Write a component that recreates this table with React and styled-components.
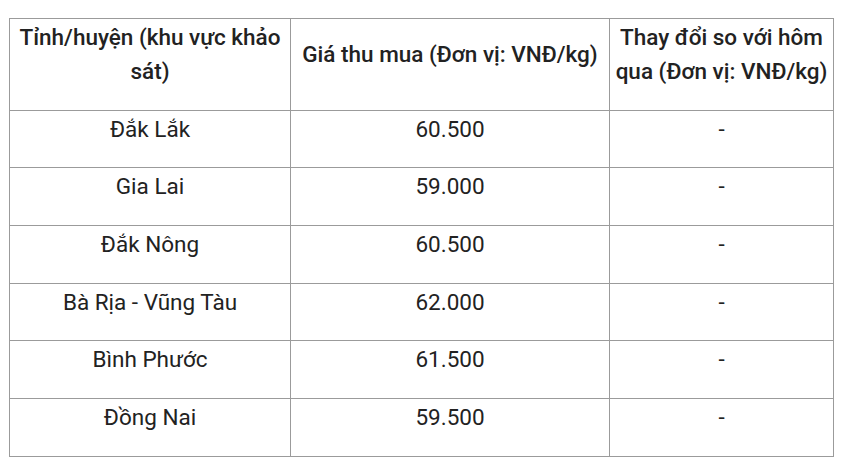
import React from 'react';
import styled, { createGlobalStyle } from 'styled-components';

const GlobalStyle = createGlobalStyle`
  body {
    margin: 0;
    background: #ffffff;
    font-family: Roboto, 'Liberation Sans', sans-serif;
    color: #222222;
  }
`;

const Page = styled.div`
  padding: 18px 0 0 9px;
`;

const Table = styled.table`
  border-collapse: collapse;
  table-layout: fixed;
  width: 824px;
`;

const Col = styled.col`
  width: ${(p) => p.$w}px;
`;

const Cell = styled.td`
  border: 1px solid #9b9b9b;
  padding: 1px 5px 21.67px;
  text-align: center;
  vertical-align: middle;
  font-size: 22.5px;
  line-height: 34px;
  font-weight: ${(p) => (p.$head ? 500 : 400)};
  color: #222222;
`;

const rows = [
  ['Đắk Lắk', '60.500', '-'],
  ['Gia Lai', '59.000', '-'],
  ['Đắk Nông', '60.500', '-'],
  ['Bà Rịa - Vũng Tàu', '62.000', '-'],
  ['Bình Phước', '61.500', '-'],
  ['Đồng Nai', '59.500', '-'],
];

export default function App() {
  return (
    <Page>
      <GlobalStyle />
      <Table>
        <colgroup>
          <Col $w={281} />
          <Col $w={319} />
          <Col $w={224} />
        </colgroup>
        <tbody>
          <tr>
            <Cell $head>Tỉnh/huyện (khu vực khảo sát)</Cell>
            <Cell $head>Giá thu mua (Đơn vị: VNĐ/kg)</Cell>
            <Cell $head>Thay đổi so với hôm qua (Đơn vị: VNĐ/kg)</Cell>
          </tr>
          {rows.map((r) => (
            <tr key={r[0]}>
              <Cell>{r[0]}</Cell>
              <Cell>{r[1]}</Cell>
              <Cell>{r[2]}</Cell>
            </tr>
          ))}
        </tbody>
      </Table>
    </Page>
  );
}
